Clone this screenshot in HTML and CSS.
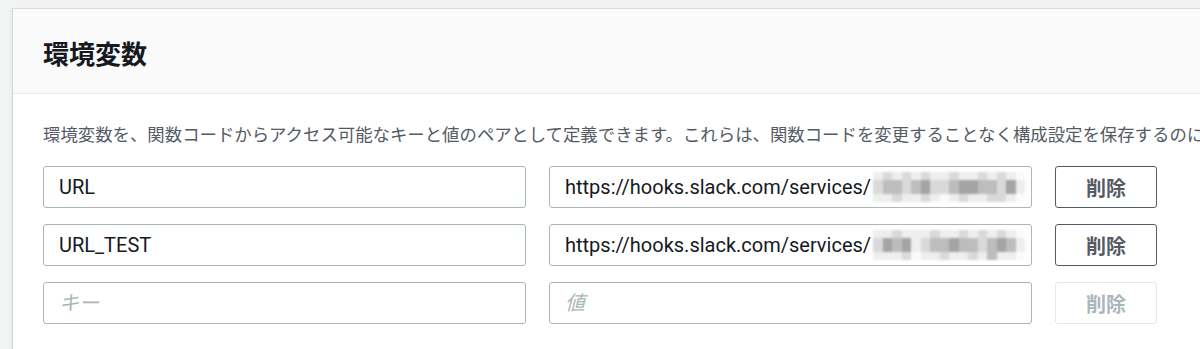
FILE: index.html
```html
<!DOCTYPE html>
<html lang="ja">
  <head>
    <meta charset="UTF-8" />
    <meta name="viewport" content="width=device-width, initial-scale=1.0" />
    <title>環境変数</title>
    <link rel="stylesheet" href="styles.css">
  </head>
  <body>
    <div class="page">
      <div class="panel">
        <div class="panel-header">
          <div class="panel-title">環境変数</div>
        </div>

        <div class="panel-body">
          <p class="panel-desc">環境変数を、関数コードからアクセス可能なキーと値のペアとして定義できます。これらは、関数コードを変更することなく構成設定を保存するのに</p>

          <div class="env-row">
            <input type="text" class="env-input" value="URL" placeholder="キー" />
            <div class="value-wrap">
              <input type="text" class="env-input" value="https://hooks.slack.com/services/" placeholder="値" />
              <div class="mosaic">
                <span class="m1"></span><span class="m2"></span><span class="m1"></span><span class="m2"></span><span class="m1"></span><span class="m2"></span><span class="m1"></span><span class="m1"></span><span class="m2"></span><span class="m1"></span><span class="m1"></span><span class="m2"></span><span class="m1"></span><span class="m2"></span><span class="m1"></span><span class="m0"></span>
                <span class="m2"></span><span class="m3"></span><span class="m3"></span><span class="m2"></span><span class="m3"></span><span class="m4"></span><span class="m2"></span><span class="m2"></span><span class="m3"></span><span class="m4"></span><span class="m4"></span><span class="m3"></span><span class="m3"></span><span class="m2"></span><span class="m4"></span><span class="m1"></span>
                <span class="m1"></span><span class="m1"></span><span class="m2"></span><span class="m1"></span><span class="m1"></span><span class="m2"></span><span class="m1"></span><span class="m0"></span><span class="m1"></span><span class="m2"></span><span class="m1"></span><span class="m1"></span><span class="m2"></span><span class="m2"></span><span class="m1"></span><span class="m0"></span>
              </div>
            </div>
            <button type="button" class="remove-button">削除</button>
          </div>

          <div class="env-row">
            <input type="text" class="env-input" value="URL_TEST" placeholder="キー" />
            <div class="value-wrap">
              <input type="text" class="env-input" value="https://hooks.slack.com/services/" placeholder="値" />
              <div class="mosaic">
                <span class="m1"></span><span class="m1"></span><span class="m2"></span><span class="m1"></span><span class="m1"></span><span class="m1"></span><span class="m2"></span><span class="m1"></span><span class="m1"></span><span class="m2"></span><span class="m1"></span><span class="m2"></span><span class="m1"></span><span class="m2"></span><span class="m1"></span><span class="m0"></span>
                <span class="m2"></span><span class="m4"></span><span class="m3"></span><span class="m4"></span><span class="m1"></span><span class="m2"></span><span class="m3"></span><span class="m3"></span><span class="m4"></span><span class="m3"></span><span class="m3"></span><span class="m2"></span><span class="m3"></span><span class="m4"></span><span class="m3"></span><span class="m1"></span>
                <span class="m1"></span><span class="m1"></span><span class="m1"></span><span class="m2"></span><span class="m0"></span><span class="m1"></span><span class="m1"></span><span class="m2"></span><span class="m1"></span><span class="m1"></span><span class="m2"></span><span class="m1"></span><span class="m3"></span><span class="m1"></span><span class="m1"></span><span class="m0"></span>
              </div>
            </div>
            <button type="button" class="remove-button">削除</button>
          </div>

          <div class="env-row">
            <input type="text" class="env-input" placeholder="キー" />
            <div class="value-wrap">
              <input type="text" class="env-input" placeholder="値" />
            </div>
            <button type="button" class="remove-button" disabled>削除</button>
          </div>
        </div>
      </div>
    </div>
  </body>
</html>
```

FILE: styles.css
```css
body,
html {
  margin: 0;
  padding: 0;
  font-family: Roboto, "Noto Sans CJK JP", sans-serif;
  background-color: #f2f3f3;
  color: #16191f;
  overflow: hidden;
}

.page {
  padding: 8px 0 0 12px;
  width: 1300px;
}

.panel {
  background-color: #ffffff;
  border: 1px solid #d5dbdb;
  border-right: none;
  box-shadow: 0 1px 2px rgba(0, 31, 63, 0.15);
  height: 400px;
}

.panel-header {
  background-color: #fafafa;
  border-bottom: 1px solid #e4e8e8;
  height: 84px;
  padding: 0 30px;
  display: flex;
  align-items: center;
}

.panel-title {
  font-size: 26px;
  font-weight: 700;
  color: #16191f;
  padding-top: 2px;
}

.panel-body {
  padding: 28px 30px 0;
}

.panel-desc {
  margin: 0 0 18px;
  font-size: 17.4px;
  line-height: 26px;
  color: #545b64;
  white-space: nowrap;
}

.env-row {
  display: flex;
  gap: 23px;
  margin-bottom: 16px;
}

.value-wrap {
  position: relative;
  width: 483px;
}

.env-input {
  box-sizing: border-box;
  width: 483px;
  height: 42px;
  padding: 0 15px;
  border: 1px solid #aab7b8;
  border-radius: 3px;
  background-color: #ffffff;
  color: #16191f;
  font-family: Roboto, "Noto Sans CJK JP", sans-serif;
  font-size: 20px;
}

.env-input:focus {
  outline: none;
}

.env-input::placeholder {
  color: #aab7b8;
  font-style: italic;
}

.mosaic {
  position: absolute;
  left: 324px;
  top: 6px;
  display: grid;
  grid-template-columns: repeat(16, 9.5px);
  grid-template-rows: 8px 14px 8px;
  filter: blur(0.8px);
}

.m0 { background-color: #fbfbfb; }
.m1 { background-color: #eeeeee; }
.m2 { background-color: #d9d9d9; }
.m3 { background-color: #bdbdbd; }
.m4 { background-color: #a4a4a4; }

.remove-button {
  box-sizing: border-box;
  width: 102px;
  height: 42px;
  background-color: #ffffff;
  border: 1px solid #545b64;
  border-radius: 3px;
  color: #545b64;
  font-family: Roboto, "Noto Sans CJK JP", sans-serif;
  font-size: 20px;
  font-weight: 700;
  cursor: pointer;
}

.remove-button[disabled] {
  border-color: #e4e8e8;
  color: #aab7b8;
  cursor: default;
}
```
